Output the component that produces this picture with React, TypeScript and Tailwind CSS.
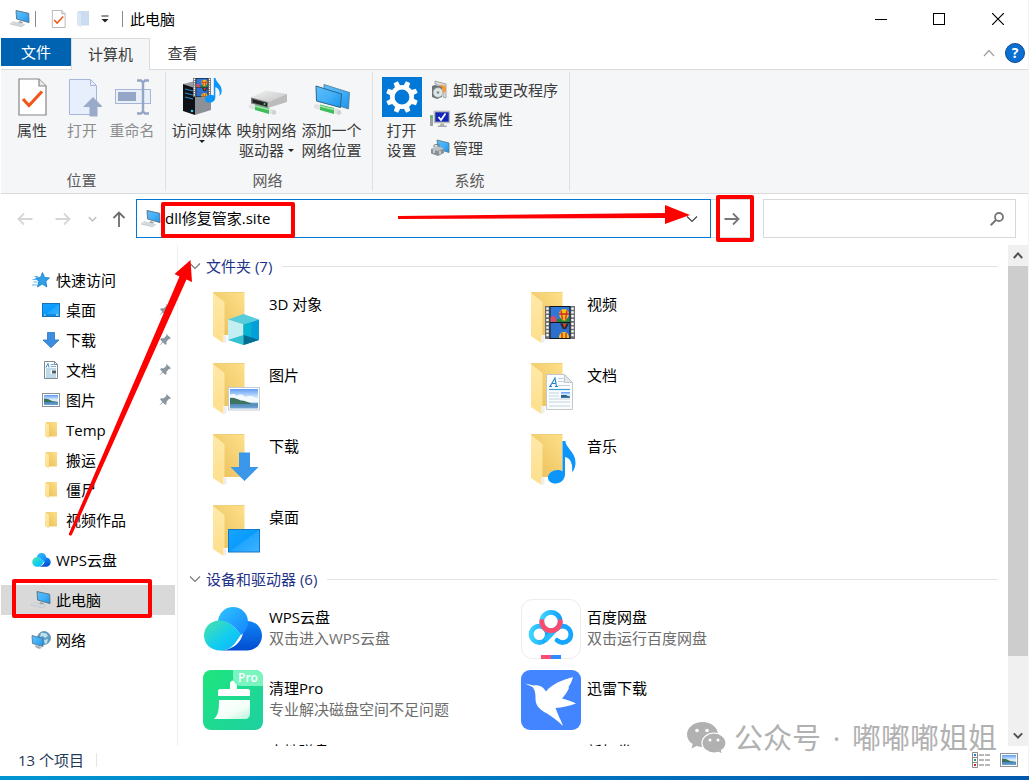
import type { ReactNode } from "react";

const FONT = "font-['Open_Sans','Noto_Sans_CJK_SC',sans-serif]";

/* ---------- shared gradients ---------- */

function Gradients() {
  return (
    <svg className="absolute size-0" aria-hidden="true">
      <defs>
        <linearGradient id="screen" x1="0" y1="0" x2="1" y2="1">
          <stop offset="0" stopColor="#5cc0fb" />
          <stop offset="0.5" stopColor="#44b0f8" />
          <stop offset="1" stopColor="#1b93ea" />
        </linearGradient>
        <linearGradient id="folderBack" x1="0" y1="1" x2="1" y2="0">
          <stop offset="0" stopColor="#e9bd57" />
          <stop offset="1" stopColor="#fde08a" />
        </linearGradient>
        <linearGradient id="folderFront" x1="0" y1="0" x2="0" y2="1">
          <stop offset="0" stopColor="#ffe9a9" />
          <stop offset="1" stopColor="#fddf8c" />
        </linearGradient>
        <linearGradient id="sky" x1="0" y1="0" x2="0" y2="1">
          <stop offset="0" stopColor="#5f9cf5" />
          <stop offset="0.5" stopColor="#e6f4fd" />
          <stop offset="0.72" stopColor="#b9d9ee" />
          <stop offset="0.75" stopColor="#4d86b8" />
          <stop offset="1" stopColor="#6fa6d4" />
        </linearGradient>
        <linearGradient id="desk" x1="0" y1="0" x2="1" y2="1">
          <stop offset="0" stopColor="#18a4ff" />
          <stop offset="0.5" stopColor="#0a9bff" />
          <stop offset="0.51" stopColor="#1fa6ff" />
          <stop offset="1" stopColor="#3fb2ff" />
        </linearGradient>
        <linearGradient id="cloudTop" x1="0" y1="0" x2="1" y2="1">
          <stop offset="0" stopColor="#2fc6ff" />
          <stop offset="1" stopColor="#1583ff" />
        </linearGradient>
        <linearGradient id="cloudLeft" x1="0" y1="0" x2="1" y2="1">
          <stop offset="0" stopColor="#4be3a4" />
          <stop offset="0.55" stopColor="#13cdf0" />
          <stop offset="1" stopColor="#0fb0fb" />
        </linearGradient>
        <linearGradient id="cloudRight" x1="0" y1="0" x2="0" y2="1">
          <stop offset="0" stopColor="#1285f6" />
          <stop offset="1" stopColor="#024cd0" />
        </linearGradient>
        <linearGradient id="metal" x1="0" y1="0" x2="1" y2="1">
          <stop offset="0" stopColor="#f2f2f2" />
          <stop offset="1" stopColor="#c4c4c4" />
        </linearGradient>
        <linearGradient id="ring" x1="0" y1="0" x2="1" y2="0">
          <stop offset="0" stopColor="#3bd3fc" />
          <stop offset="1" stopColor="#12a2ff" />
        </linearGradient>
        <linearGradient id="bristles" x1="0" y1="0" x2="1" y2="1">
          <stop offset="0" stopColor="#ffffff" />
          <stop offset="0.6" stopColor="#f3fff8" />
          <stop offset="1" stopColor="#b9f3da" />
        </linearGradient>
      </defs>
    </svg>
  );
}

/* ---------- small icons ---------- */

function PcIcon() {
  return (
    <svg viewBox="0 0 20 18" className="h-[18px] w-5 shrink-0" aria-hidden="true">
      <path d="M6 0.5 18.7 3.3 19 12.6 6.6 9z" fill="url(#screen)" stroke="#56717f" strokeWidth="0.9" />
      <path d="M9.6 11 13 12.2 12.2 13.6 8 12.6z" fill="#9aa4ab" />
      <path d="M3 11.7 14.6 14.6 11.6 16.8 0 14z" fill="#e4e8eb" stroke="#b4bcc2" strokeWidth="0.6" />
      <path d="M3.2 13 12.8 15.5M1.8 14 12 16.2" stroke="#bcc3c8" strokeWidth="0.5" />
    </svg>
  );
}

function CheckDoc({ className }: { className: string }) {
  return (
    <svg viewBox="0 0 30 38" className={className} aria-hidden="true">
      <path d="M2 1h20l7 7v29H2z" fill="#fff" stroke="#858585" strokeWidth="1.2" />
      <path d="M22 1v7h7" fill="#e8e8e8" stroke="#858585" strokeWidth="1.2" />
      <path d="M6 21 12 27.500 25 13.500" fill="none" stroke="#f1561b" strokeWidth="3.200" />
    </svg>
  );
}

function SmallFolder({ pale = false }: { pale?: boolean }) {
  return (
    <svg viewBox="0 0 12 18" className="h-[18px] w-3 shrink-0" aria-hidden="true">
      <path d="M1 1h11v14.500H2z" fill={pale ? "#cbdbf0" : "url(#folderBack)"} />
      <path d="M0 1l4 3v13.500L0 15z" fill={pale ? "#dbe7f6" : "url(#folderFront)"} />
    </svg>
  );
}

function Star() {
  return (
    <svg viewBox="0 0 18 16" className="h-4 w-[18px]" aria-hidden="true">
      <path d="M10.500 0.500 12.600 5.400 17.500 5.900 13.900 9.300 14.900 15 10.200 12 5.500 15 6.800 9.400 3.500 6 8.500 5.400z" fill="#2f9fe8" stroke="#147cc9" strokeWidth="0.8" />
      <path d="M2.500 4.500H6M0.500 7.500h4.500M1.500 10h4M0 13h5" stroke="#4bb1f2" strokeWidth="0.9" />
    </svg>
  );
}

function DesktopSmall() {
  return (
    <svg viewBox="0 0 18 14" className="h-[14px] w-[18px]" aria-hidden="true">
      <rect x="0.5" y="0.5" width="17" height="13" fill="url(#desk)" stroke="#1672b8" />
      <path d="M1 12h16" stroke="#0d7fd6" strokeWidth="1.500" />
      <path d="M2 12h1.500M14 12h2.500" stroke="#fff" strokeWidth="1" />
    </svg>
  );
}

function DownSmall() {
  return (
    <svg viewBox="0 0 18 16" className="h-4 w-[18px]" aria-hidden="true">
      <path d="M5.500 0.500h7v7.500h4.500L9 15.700 1 8h4.500z" fill="#3c8fe0" stroke="#2c75c0" strokeWidth="0.8" />
    </svg>
  );
}

function DocSmall() {
  return (
    <svg viewBox="0 0 18 18" className="size-[18px]" aria-hidden="true">
      <path d="M2.500 0.500h10l3 3v14h-13z" fill="#fff" stroke="#7f8a90" />
      <path d="M12.500 0.500v3h3" fill="none" stroke="#7f8a90" />
      <path d="M4 6.500l2-4M6 2.500l1 4" stroke="#2487c8" strokeWidth="0.9" />
      <path d="M8.500 3.500H12M8.500 5.500h5.500M4 8h10M4 10h4.500M4 12h4.500M4 14h10M4 16h10" stroke="#6fa9cd" strokeWidth="0.9" />
      <rect x="10" y="9.500" width="4" height="3" fill="#46616e" />
    </svg>
  );
}

function PictureSmall() {
  return (
    <svg viewBox="0 0 18 14" className="h-[14px] w-[18px]" aria-hidden="true">
      <rect x="0.5" y="0.5" width="17" height="13" fill="#fff" stroke="#8c9499" />
      <rect x="2" y="2" width="14" height="10" fill="url(#sky)" />
      <path d="M2 5.500 6 6 10 8 16 9H2z" fill="#3c7258" />
    </svg>
  );
}

function CloudIcon({ className }: { className: string }) {
  return (
    <svg viewBox="0 0 58 44" className={className} aria-hidden="true">
      <path d="M16 43.500C32 43 39 32 39 24c0-4 2-9 4-10 9 0 15 7 15 14.500 0 9-7 15-15 15z" fill="url(#cloudRight)" />
      <path d="M14 14C15 6 21 0 29 0c8 0 15 6 15 15 0 6-3 10-7 13C31 20 25 14 14 14z" fill="url(#cloudTop)" />
      <path d="M15 13.500c9 0 15 6 22 14C32 34 29 43.500 16 43.500 7 43.500 0 37 0 28.500S7 13.500 15 13.500z" fill="url(#cloudLeft)" />
    </svg>
  );
}

function NetworkIcon() {
  return (
    <svg viewBox="0 0 20 18" className="h-[18px] w-5" aria-hidden="true">
      <circle cx="13" cy="7" r="6.500" fill="#5b9fc8" stroke="#5b8097" strokeWidth="0.7" />
      <path d="M10 2c2-1 3 1 5 0l2 3-3 2-2-2-3 1zM13 9l4-1-1 4-2 1z" fill="#bfe2ef" />
      <path d="M1 4.500 12 7.500v8L1.500 12.500z" fill="url(#screen)" stroke="#4d7287" strokeWidth="0.8" />
      <path d="M5 14l4 1.500 2 1.500-3 1-4-2z" fill="#a9b1b6" />
    </svg>
  );
}

function Pin() {
  return (
    <svg viewBox="0 0 14 14" className="size-[14px]" aria-hidden="true">
      <path d="M8.200 0.800 13 5.200 11.800 6 11.200 5.800 8.600 8.600 8.400 11.400 7.300 11.800 4.900 9.400 1 13 4.300 8.700 2.100 6.500 3 5.300 5.800 5.300 8.400 2.700z" fill="#8b969e" />
    </svg>
  );
}

function Chevron({ className, color, up = false, width = 1.2 }: { className: string; color: string; up?: boolean; width?: number }) {
  return (
    <svg viewBox="0 0 12 8" className={className} aria-hidden="true">
      <path d={up ? "M1 7 6 1.500 11 7" : "M1 1.500 6 6.500 11 1.500"} fill="none" stroke={color} strokeWidth={width} />
    </svg>
  );
}

/* ---------- ribbon icons ---------- */

function OpenIcon() {
  return (
    <svg viewBox="0 0 40 40" className="size-10" aria-hidden="true">
      <path d="M7.500 2.500h21l6 6v29h-27z" fill="#e6effb" stroke="#a5b6d6" />
      <path d="M28.500 2.500v6h6" fill="none" stroke="#a5b6d6" />
      <path d="M31 20 41 30h-5.500v9.500h-8V30H21z" fill="#9aaac8" />
    </svg>
  );
}

function RenameIcon() {
  return (
    <svg viewBox="0 0 40 40" className="size-10" aria-hidden="true">
      <rect x="3.500" y="12.500" width="35" height="14" fill="#e8eff9" stroke="#a5b6d6" />
      <rect x="6" y="15" width="18" height="9" fill="#94a5c5" />
      <path d="M25 3.500h4l2 2 2-2h4M31 5v31M25 36.500h4l2-2 2 2h4" fill="none" stroke="#94a5c5" strokeWidth="2.400" />
    </svg>
  );
}

function Balloons({ x, y, w, h }: { x: number; y: number; w: number; h: number }) {
  return (
    <svg x={x} y={y} width={w} height={h} viewBox="0 0 30 33" preserveAspectRatio="none">
      <rect width="30" height="33" fill="#6b6f73" />
      <path d="M2.500 1.500v30M27.500 1.500v30" stroke="#fff" strokeWidth="2.400" strokeDasharray="2.200 1.600" />
      <rect x="4.500" width="21" height="33" fill="#141414" />
      <rect x="5.500" y="1" width="19" height="15" fill="#2f77d8" />
      <rect x="5.500" y="17" width="19" height="15" fill="#2f6fcc" />
      <path d="M5.500 12c2-2 4-1 6 1l13-1v4h-19z" fill="#27813f" />
      <path d="M5.500 11l3-1.500 3 3v3.500h-6z" fill="#d84a68" />
      <path d="M14 8a5 5 0 0 1 10 0c0 3-2.500 4.500-3.500 6.500h-3C16.500 12.500 14 11 14 8z" fill="#f4bd19" />
      <path d="M16 4.500l1.500 9M22 4.500l-1.500 9M14 8h10" stroke="#cb2d2d" strokeWidth="1.300" />
      <path d="M15 17.500h9l-3 5.500h-3z" fill="#292929" />
      <path d="M17.500 17.500h4l-2 4.500z" fill="#e0452f" />
      <path d="M14 32v-1a5 5 0 0 1 10 0v1z" fill="#f4c21c" />
      <path d="M17 27v5M21 27v5" stroke="#ca2d2d" strokeWidth="1.400" />
    </svg>
  );
}

function Note({ x, y, w, h }: { x: number; y: number; w: number; h: number }) {
  return (
    <svg x={x} y={y} width={w} height={h} viewBox="0 0 28 43" preserveAspectRatio="none">
      <path d="M14.500 0h2.800c.4 7 10.200 11 10.200 21.500 0 4-1.500 8-3.500 9.500 1-7-1-14-7-15v17c0 5.500-4 9.500-9.500 9.500C3 42.500 0 40 0 36.500 0 32 5 29 9.500 29c2 0 3.500.3 5 1.200z" fill="#0c95fb" />
    </svg>
  );
}

function MediaIcon() {
  return (
    <svg viewBox="0 0 40 40" className="size-10" aria-hidden="true">
      <path d="M1 7 11 4.500 29 8 13 11z" fill="#9a9ea2" />
      <path d="M1 7 13 11v27L1 34z" fill="#0f1216" />
      <path d="M13 11 29 8v25l-16 5z" fill="#8c9198" />
      <path d="M3 12l8 2M3 16l8 2M3 20l8 2" stroke="#2f86c8" strokeWidth="1.200" />
      <circle cx="10" cy="34" r="1.300" fill="#39d1f3" />
      <Balloons x={11} y={1} w={18} h={19} />
      <Note x={23} y={1} w={17} h={25} />
    </svg>
  );
}

function NetCable() {
  return (
    <>
      <path d="M4 29.500 27 35" stroke="#dfe3e1" strokeWidth="4.500" strokeLinecap="round" />
      <path d="M8 27.500 22 31v6L8 33z" fill="#3fbd5b" />
      <path d="M8 29l14 3.500" stroke="#9ee6a9" strokeWidth="1.400" />
      <circle cx="27" cy="35.500" r="2.300" fill="#cdd3d0" />
    </>
  );
}

function DriveIcon() {
  return (
    <svg viewBox="0 0 40 40" className="size-10" aria-hidden="true">
      <NetCable />
      <path d="M4 20.500 19 13.500 40 17 21 25z" fill="url(#metal)" />
      <path d="M21 25 40 17v8l-19 6z" fill="#bcbcbc" />
      <path d="M4 20.500 21 25v6L4 26.500z" fill="#777a7c" />
      <path d="M5.500 22 20 26v3.500L5.500 25.500z" fill="#1e2224" />
      <circle cx="17.500" cy="27" r="1" fill="#51dd63" />
    </svg>
  );
}

function NetPlaceIcon() {
  return (
    <svg viewBox="0 0 40 40" className="size-10" aria-hidden="true">
      <path d="M12 7.500 37.500 15.500 36.500 32 12 24z" fill="url(#screen)" stroke="#53798f" strokeWidth="0.8" />
      <NetCable />
      <path d="M4 9 29.500 17 28.500 30.500 4.500 24z" fill="url(#screen)" stroke="#2c658a" strokeWidth="1" />
    </svg>
  );
}

function GearIcon() {
  const teeth = [22, 67, 112, 157, 202, 247, 292, 337];
  return (
    <svg viewBox="0 0 40 40" className="size-10" aria-hidden="true">
      <rect width="40" height="40" fill="#0078d7" />
      <g fill="#fff">
        {teeth.map((a) => (
          <path key={a} d="M17 11 17.700 4h4.600L23 11z" transform={`rotate(${a} 20 20)`} />
        ))}
      </g>
      <circle cx="20" cy="20" r="9.700" fill="none" stroke="#fff" strokeWidth="4.600" />
    </svg>
  );
}

function UninstallIcon() {
  return (
    <svg viewBox="0 0 20 20" className="size-5" aria-hidden="true">
      <path d="M5 1 16 4v14l-3-1V7L5 4z" fill="#dadada" stroke="#8d8d8d" strokeWidth="0.7" />
      <circle cx="12" cy="9" r="4" fill="#f49a32" />
      <path d="M2 6l3-1 7 2v10l-5 2-5-2z" fill="#6c7478" />
      <circle cx="8" cy="12.500" r="4.800" fill="#dde7e5" stroke="#9aa7a7" strokeWidth="0.6" />
      <circle cx="8" cy="12.500" r="1.300" fill="#7f8b8b" />
    </svg>
  );
}

function SysPropsIcon() {
  return (
    <svg viewBox="0 0 20 20" className="size-5" aria-hidden="true">
      <path d="M0 6h3v11H0z" fill="#9ca39f" />
      <path d="M0.500 7h2v2h-2z" fill="#34cf3a" />
      <rect x="4.500" y="2.500" width="15" height="11" fill="#1427b8" stroke="#b9bdb9" strokeWidth="1.600" />
      <path d="M8.500 8l2.500 3 4.500-6.500" fill="none" stroke="#fff" strokeWidth="1.700" />
      <path d="M10.500 14.500h3l1 2h2l.5 1.500H7.500l.5-1.500h2z" fill="#a9aea9" />
    </svg>
  );
}

function ManageIcon() {
  return (
    <svg viewBox="0 0 20 20" className="size-5" aria-hidden="true">
      <path d="M7 2 19 5v9.500L8 11z" fill="url(#screen)" stroke="#57737f" strokeWidth="0.8" />
      <path d="M1 11l6-3 7 2.500V15l-6 3-7-2.500z" fill="#8b9297" />
      <path d="M1 11l6-3 7 2.500-6 2.500z" fill="#bdc3c6" />
      <path d="M4 9V7l5-1v3" fill="none" stroke="#767d81" />
      <path d="M4 12v3M10 13v3" stroke="#f0f0f0" strokeWidth="1.200" />
    </svg>
  );
}

/* ---------- tile icons ---------- */

function Folder({ children }: { children?: ReactNode }) {
  return (
    <svg viewBox="0 -1 60 60" className="size-[60px] shrink-0" aria-hidden="true">
      <path d="M10 5.500h31.500V48H20z" fill="url(#folderBack)" />
      <path d="M10 5.500h31.500" stroke="#f0d07c" strokeWidth="1" />
      <path d="M10 6 21.500 15v32.500l-1 1V56L10 49z" fill="url(#folderFront)" />
      <path d="M20.500 48.500V56l3-1v-6.500z" fill="#eee" />
      {children}
    </svg>
  );
}

function Cube() {
  return (
    <>
      <path d="M40.500 27 56 32.500 40.500 37.500 25 32.500z" fill="#56cddd" />
      <path d="M25 32.500 40.500 37.500v20.500L25 53z" fill="#c3eef2" />
      <path d="M40.500 37.500 56 32.500V53l-15.500 5z" fill="#049fd8" />
      <path d="M40.500 37.500l8-2.500v15l-8-2z" fill="#05b4cf" />
      <path d="M40.500 48v10L25 53z" fill="#32c2d2" />
      <path d="M40.500 48v10L56 53z" fill="#056c92" />
    </>
  );
}

function Picture() {
  return (
    <>
      <rect x="25.500" y="29.500" width="31" height="22.500" fill="#fff" stroke="#c5ccd2" />
      <rect x="27" y="31" width="28" height="19.500" fill="url(#sky)" />
      <path d="M27 37c3-2 5-1 7 1 4-3 6-1 8 1 5-2 8-1 13 2v3H27z" fill="#f3fafe" />
      <path d="M27 40c4-1 7 1 11 2.500 4 0 8 2 11 3.500H27z" fill="#3d7460" />
    </>
  );
}

function Paper() {
  return (
    <>
      <path d="M25.500 16.500h18l8 8v27h-26z" fill="#fafcfd" stroke="#c3c8cb" />
      <path d="M43.500 16.500v8h8z" fill="#e3e7ea" stroke="#b8bec2" strokeWidth="0.8" />
      <path d="M29 28.500 34 20l1.500 8.500M31 25.500h4M28 28.500h3M34 28.500h3" fill="none" stroke="#2483c5" strokeWidth="1.100" />
      <path d="M28 31.500h21" stroke="#3f9fd8" strokeWidth="1.200" />
      <path d="M37 20.500h6M37 23.500h6M37 27.500h12M28 35h10M28 38h10M28 41h21M28 44h21M28 48h21" stroke="#c3d3dd" strokeWidth="1" />
      <rect x="40" y="34" width="9" height="6" fill="url(#sky)" />
      <path d="M40 37h5l4 2.500h-9z" fill="#256084" />
    </>
  );
}

function CleanerIcon() {
  return (
    <span className="relative block size-[60px] overflow-hidden rounded-lg bg-linear-to-br from-[#1fe57c] to-[#1fd0a0]">
      <svg viewBox="0 0 60 60" className="size-[60px]" aria-hidden="true">
        <path d="M27 14a3.500 3.500 0 0 1 7 0v5h11c1.500 0 2 1 2 2v5H15v-5c0-1 1-2 2-2h10z" fill="#fff" />
        <path d="M16 30h31v13c0 4-2 6-5 6H11c4-4 5-8 5-19z" fill="url(#bristles)" />
      </svg>
      <span className="absolute top-0 right-0 flex h-4 w-[30px] items-center justify-center rounded-bl-lg bg-[#7bf5c0] text-xs font-semibold text-white">
        Pro
      </span>
    </span>
  );
}

function BaiduIcon() {
  return (
    <svg viewBox="0 0 60 60" className="size-[60px] shrink-0" aria-hidden="true">
      <rect x="0.500" y="0.500" width="59" height="59" rx="11" fill="#fff" stroke="#ececec" />
      <g fill="none" strokeWidth="4.800">
        <circle cx="18.300" cy="35.300" r="8.200" stroke="url(#ring)" />
        <path d="M24 41.500 35 30" stroke="#27bdfd" />
        <path d="M36 41.300a8.200 8.200 0 1 0 0-11.800" stroke="#16a6ff" strokeLinecap="round" />
        <circle cx="30" cy="22.500" r="9.200" fill="#fff" stroke="url(#ring)" />
        <path d="M20.800 22.500a9.200 9.200 0 0 0 18.400 0" stroke="#fb4c70" strokeLinecap="round" />
      </g>
      <path d="M20 56h10v4H20z" fill="#ff4d72" />
      <path d="M30 56h10v4H30z" fill="#2b8cff" />
    </svg>
  );
}

function BirdIcon() {
  return (
    <svg viewBox="0 0 60 60" className="size-[60px] shrink-0" aria-hidden="true">
      <rect width="60" height="60" rx="9" fill="#4285ff" />
      <path d="M4 13.500 13 15.500c5-1 9 1 12 6C31 14 41 10 52 7c-1 4-2.500 7-4.500 10l.5 1c-2 4.500-4 7-7 10.500C46 29.500 51 31.500 55 33.500 48 36 41 37.500 34.500 38c2 6 5 11 7.500 18C36 50 31 46.500 26 43.500c-8-4-12-9-11.500-15.500 0-5-.5-8-3-11z" fill="#fff" />
    </svg>
  );
}

/* ---------- window chrome ---------- */

function TitleBar() {
  return (
    <header className="flex h-[38px] shrink-0 items-center pl-[9px]">
      <PcIcon />
      <span className="ml-[5px] h-4 w-px bg-[#8a8a8a]" />
      <button type="button" aria-label="属性" className="ml-[15px]">
        <CheckDoc className="h-[18px] w-[15px]" />
      </button>
      <button type="button" aria-label="新建文件夹" className="ml-[11px]">
        <SmallFolder pale />
      </button>
      <button type="button" aria-label="自定义快速访问工具栏" className="ml-3">
        <svg viewBox="0 0 8 8" className="size-2" aria-hidden="true">
          <path d="M0.500 1h7" stroke="#222" />
          <path d="M0.500 4h7L4 7.500z" fill="#222" />
        </svg>
      </button>
      <span className="ml-[13px] h-4 w-px bg-[#8a8a8a]" />
      <h1 className="ml-[7px] text-black">此电脑</h1>
      <div className="ml-auto flex h-full">
        <button type="button" aria-label="最小化" className="flex w-[58px] items-center justify-center">
          <span className="h-px w-3 bg-black" />
        </button>
        <button type="button" aria-label="最大化" className="flex w-[58px] items-center justify-center">
          <span className="size-3 border border-black" />
        </button>
        <button type="button" aria-label="关闭" className="flex w-[60px] items-center justify-center">
          <svg viewBox="0 0 12 12" className="size-3" aria-hidden="true">
            <path d="M0 0 12 12M12 0 0 12" stroke="#000" strokeWidth="1.200" />
          </svg>
        </button>
      </div>
    </header>
  );
}

function Tabs() {
  return (
    <nav className="flex h-8 shrink-0 items-stretch border-b border-[#dadbdc]">
      <button type="button" className="mb-[3px] w-[70px] bg-[#0063b1] text-white">
        文件
      </button>
      <button type="button" className="-mb-px w-[79px] border border-b-0 border-[#dadbdc] bg-[#f5f6f7] pb-px text-[#3b3b3b]">
        计算机
      </button>
      <button type="button" className="w-[65px] pb-px text-[#3b3b3b]">
        查看
      </button>
      <div className="ml-auto flex items-center gap-[10px] pr-[3px] pb-px">
        <button type="button" aria-label="最小化功能区">
          <Chevron className="h-2 w-3" color="#a0a0a0" up />
        </button>
        <button
          type="button"
          aria-label="帮助"
          className="size-5 rounded-full border border-[#0b4c93] bg-[#0a6fd0] text-sm leading-[18px] font-bold text-white"
        >
          ?
        </button>
      </div>
    </nav>
  );
}

function BigButton({ icon, lines, width, muted = false, caret }: {
  icon: ReactNode;
  lines: string[];
  width: string;
  muted?: boolean;
  caret?: "inline" | "below";
}) {
  const arrow = (
    <svg viewBox="0 0 6 3" className="h-[3px] w-[6px]" aria-hidden="true">
      <path d="M0 0h6L3 3z" fill="#222" />
    </svg>
  );
  return (
    <button type="button" className={`flex flex-col items-center whitespace-nowrap ${width} ${muted ? "text-[#8d8d8d]" : "text-[#3b3b3b]"}`}>
      <span className="mb-[3px] flex size-10 items-center justify-center">{icon}</span>
      {lines.map((line, i) => (
        <span key={line} className="flex h-5 items-center gap-1 leading-5">
          {line}
          {caret === "inline" && i === lines.length - 1 && arrow}
        </span>
      ))}
      {caret === "below" && arrow}
    </button>
  );
}

function RibbonGroup({ title, width, children }: { title: string; width: string; children: ReactNode }) {
  return (
    <section className={`my-[2px] flex flex-col border-r border-[#dfe0e2] pt-[5px] pb-px ${width}`}>
      <div className="flex flex-1 items-start">{children}</div>
      <h2 className="h-5 pr-[3px] text-center leading-5 text-[#5a5a5a]">{title}</h2>
    </section>
  );
}

const systemLinks = [
  { label: "卸载或更改程序", icon: <UninstallIcon /> },
  { label: "系统属性", icon: <SysPropsIcon /> },
  { label: "管理", icon: <ManageIcon /> },
];

function Ribbon() {
  return (
    <div className="flex h-[124px] shrink-0 border-b border-[#dadbdc] bg-[#f5f6f7]">
      <RibbonGroup title="位置" width="w-[165px]">
        <div className="flex pl-[6px]">
          <BigButton icon={<CheckDoc className="h-[38px] w-[30px]" />} lines={["属性"]} width="w-[50px]" />
          <BigButton icon={<OpenIcon />} lines={["打开"]} width="w-[50px]" muted />
          <BigButton icon={<RenameIcon />} lines={["重命名"]} width="w-[50px]" muted />
        </div>
      </RibbonGroup>
      <RibbonGroup title="网络" width="w-[207px]">
        <div className="flex pl-[3px]">
          <BigButton icon={<MediaIcon />} lines={["访问媒体"]} width="w-[65px]" caret="below" />
          <BigButton icon={<DriveIcon />} lines={["映射网络", "驱动器"]} width="w-[65px]" caret="inline" />
          <BigButton icon={<NetPlaceIcon />} lines={["添加一个", "网络位置"]} width="w-[65px]" />
        </div>
      </RibbonGroup>
      <RibbonGroup title="系统" width="w-[197px]">
        <div className="flex items-start pl-[3px]">
          <BigButton icon={<GearIcon />} lines={["打开", "设置"]} width="w-[51px]" />
          <div className="-mt-[2px] ml-[3px] flex flex-col">
            {systemLinks.map(({ label, icon }) => (
              <button key={label} type="button" className="flex h-[29px] items-center gap-[3px] text-[#3b3b3b]">
                {icon}
                {label}
              </button>
            ))}
          </div>
        </div>
      </RibbonGroup>
    </div>
  );
}

function NavArrow({ d, color }: { d: string; color: string }) {
  return (
    <svg viewBox="0 0 16 16" className="size-4" aria-hidden="true">
      <path d={d} fill="none" stroke={color} strokeWidth="1.800" />
    </svg>
  );
}

function AddressRow() {
  return (
    <div className="flex h-[51px] shrink-0 items-start pt-[5px] pr-3 pl-4">
      <div className="flex h-[39px] w-[119px] shrink-0 items-center">
        <button type="button" aria-label="后退">
          <NavArrow d="M15.500 8H1M7 2.500 1.500 8 7 13.500" color="#d6d6d6" />
        </button>
        <button type="button" aria-label="前进" className="ml-[22px]">
          <NavArrow d="M0.500 8H15M9 2.500 14.500 8 9 13.500" color="#d6d6d6" />
        </button>
        <button type="button" aria-label="最近浏览的位置" className="ml-[17px]">
          <Chevron className="h-[6px] w-[9px]" color="#c4c4c4" width={2} />
        </button>
        <button type="button" aria-label="上移" className="ml-[14px]">
          <NavArrow d="M8 16V1M2.500 7 8 1.500 13.500 7" color="#6d6d6d" />
        </button>
      </div>
      <div className="relative flex h-[39px] flex-1 items-center border border-[#0078d7] pl-1">
        <PcIcon />
        <input
          aria-label="地址"
          defaultValue="dll修复管家.site"
          className="ml-1 h-full min-w-0 flex-1 pb-[2px] text-black outline-none"
        />
        <button type="button" aria-label="以前的位置" className="mr-3">
          <Chevron className="h-2 w-3" color="#444" />
        </button>
        <span className="absolute top-[2px] left-6 h-9 w-[134px] rounded-xs border-4 border-[#ff0000]" />
        <svg viewBox="0 0 294 22" className="absolute top-1 right-[19px] h-[22px] w-[294px]" aria-hidden="true">
          <path d="M1 12 268 9V1L293 11 268 20v-6L1 15z" fill="#ff0000" />
        </svg>
      </div>
      <button
        type="button"
        aria-label="转到"
        className="relative flex h-[39px] w-[42px] items-center justify-center border border-l-0 border-[#d9d9d9]"
      >
        <NavArrow d="M0.500 8H15M9 2.500 14.500 8 9 13.500" color="#777" />
        <span className="absolute -top-[5px] -right-[2px] h-[47px] w-[38px] rounded-xs border-4 border-[#ff0000]" />
      </button>
      <label className="ml-[10px] flex h-[39px] w-[253px] items-center border border-[#d9d9d9] pr-[11px]">
        <input aria-label="搜索此电脑" className="h-full min-w-0 flex-1 pl-2 outline-none" />
        <svg viewBox="0 0 14 14" className="size-[14px]" aria-hidden="true">
          <circle cx="9" cy="5" r="4" fill="none" stroke="#777" strokeWidth="1.800" />
          <path d="M6 8 0.700 13.300" stroke="#777" strokeWidth="2" />
        </svg>
      </label>
    </div>
  );
}

/* ---------- body ---------- */

const quickAccess = [
  { label: "桌面", icon: <DesktopSmall />, pinned: true },
  { label: "下载", icon: <DownSmall />, pinned: true },
  { label: "文档", icon: <DocSmall />, pinned: true },
  { label: "图片", icon: <PictureSmall />, pinned: true },
  { label: "Temp", icon: <SmallFolder /> },
  { label: "搬运", icon: <SmallFolder /> },
  { label: "僵尸", icon: <SmallFolder /> },
  { label: "视频作品", icon: <SmallFolder /> },
];

function SideLink({ label, icon, nested = false, pinned = false, active = false }: {
  label: string;
  icon: ReactNode;
  nested?: boolean;
  pinned?: boolean;
  active?: boolean;
}) {
  return (
    <a
      href="#"
      className={`relative mr-[2px] flex h-[30px] items-center text-black ${nested ? "pl-10" : "pl-[30px]"} ${active ? "bg-[#d9d9d9]" : ""}`}
    >
      <span className="mr-[5px] flex w-5 shrink-0 items-center justify-center">{icon}</span>
      {label}
      {pinned && (
        <span className="mr-[3px] ml-auto">
          <Pin />
        </span>
      )}
      {active && <span className="absolute -top-[6px] left-[11px] h-[39px] w-[140px] rounded-xs border-4 border-[#ff0000]" />}
    </a>
  );
}

function Sidebar() {
  return (
    <aside className="w-[177px] shrink-0 border-r border-[#f0f0f0] pt-5">
      <SideLink label="快速访问" icon={<Star />} />
      {quickAccess.map((item) => (
        <SideLink key={item.label} {...item} nested />
      ))}
      <div className="mt-[10px] flex flex-col gap-[10px]">
        <SideLink label="WPS云盘" icon={<CloudIcon className="h-[14px] w-[19px]" />} />
        <SideLink label="此电脑" icon={<PcIcon />} active />
        <SideLink label="网络" icon={<NetworkIcon />} />
      </div>
    </aside>
  );
}

const folders = [
  { name: "3D 对象", art: <Cube /> },
  { name: "视频", art: <Balloons x={24} y={19} w={30} h={33} /> },
  { name: "图片", art: <Picture /> },
  { name: "文档", art: <Paper /> },
  { name: "下载", art: <path d="M36 23.500h11V38h8.500L41.500 52 27.500 38H36z" fill="#3b97ea" /> },
  { name: "音乐", art: <Note x={27} y={12} w={28} h={43} /> },
  { name: "桌面", art: <rect x="25.500" y="29.500" width="31" height="22.500" fill="url(#desk)" stroke="#1479c4" /> },
];

const devices = [
  { name: "WPS云盘", note: "双击进入WPS云盘", icon: <CloudIcon className="h-11 w-[58px]" /> },
  { name: "百度网盘", note: "双击运行百度网盘", icon: <BaiduIcon /> },
  { name: "清理Pro", note: "专业解决磁盘空间不足问题", icon: <CleanerIcon /> },
  { name: "迅雷下载", note: "", icon: <BirdIcon /> },
];

const drives = ["本地磁盘 (C:)", "新加卷 (D:)"];

function GroupTitle({ children }: { children: ReactNode }) {
  return (
    <h2 className="flex h-[22px] items-center text-[#1e3287]">
      <Chevron className="mr-[5px] h-2 w-3" color="#7b7b7b" />
      {children}
      <span className="ml-[10px] h-px flex-1 bg-[#e2e2e2]" />
    </h2>
  );
}

function Tile({ icon, name, note }: { icon: ReactNode; name: string; note?: string }) {
  return (
    <li className="flex h-[60px] gap-[6px] pl-[14px]">
      <span className="flex size-[60px] shrink-0 items-center justify-center">{icon}</span>
      <div className="pt-2 leading-[21px] whitespace-nowrap">
        <p className="text-black">{name}</p>
        {note && <p className="text-[#6d6d6d]">{note}</p>}
      </div>
    </li>
  );
}

function Content() {
  return (
    <main className="min-w-0 flex-1 overflow-hidden">
      <div className="flex flex-col gap-[9px] pt-[10px] pr-[10px] pl-[11px]">
        <GroupTitle>文件夹 (7)</GroupTitle>
        <ul className="grid grid-cols-[318px_318px] gap-y-[11px]">
          {folders.map(({ name, art }) => (
            <Tile key={name} name={name} icon={<Folder>{art}</Folder>} />
          ))}
        </ul>
        <GroupTitle>设备和驱动器 (6)</GroupTitle>
        <ul className="grid grid-cols-[318px_318px] gap-y-[11px]">
          {devices.map((d) => (
            <Tile key={d.name} {...d} />
          ))}
          {drives.map((name) => (
            <li key={name} className="h-[60px] pl-20 leading-[21px] text-black">
              {name}
            </li>
          ))}
        </ul>
      </div>
    </main>
  );
}

function Scrollbar() {
  return (
    <div className="flex w-5 shrink-0 flex-col bg-[#f0f0f0]">
      <button type="button" aria-label="向上滚动" className="flex h-[21px] items-center justify-center">
        <Chevron className="h-[7px] w-[10px]" color="#505050" up width={2.4} />
      </button>
      <div className="flex-1">
        <div className="h-[85%] bg-[#cdcdcd]" />
      </div>
      <button type="button" aria-label="向下滚动" className="flex h-[21px] items-center justify-center">
        <Chevron className="h-[7px] w-[10px]" color="#505050" width={2.4} />
      </button>
    </div>
  );
}

function Watermark() {
  return (
    <div className="absolute right-8 bottom-[22px] flex h-10 items-center text-[29px] leading-10 whitespace-nowrap text-[#b1b1b1]">
      <svg viewBox="0 0 39 32" className="mr-2 h-8 w-[39px]" aria-hidden="true">
        <path d="M15.500 0C7 0 0 5.500 0 12.500c0 4 2.200 7.300 5.700 9.500L4.500 26.500 9.500 24c2 .6 4 .9 6 .9C24 25 31 19.500 31 12.500S24 0 15.500 0z" fill="#b1b1b1" />
        <path d="M27 11c-6.700 0-12 4.500-12 10s5.300 10 12 10c1.600 0 3-.3 4.500-.7l4 1.700-1-3.500c2.700-1.800 4.500-4.500 4.500-7.500 0-5.500-5.300-10-12-10z" fill="#b1b1b1" stroke="#fff" strokeWidth="1.200" />
        <g fill="#fff">
          <circle cx="10" cy="8.500" r="1.800" />
          <circle cx="20" cy="8.500" r="1.800" />
          <circle cx="23" cy="18" r="1.500" />
          <circle cx="31" cy="18" r="1.500" />
        </g>
      </svg>
      <span>公众号</span>
      <span className="w-[31px] text-center">·</span>
      <span>嘟嘟嘟姐姐</span>
    </div>
  );
}

function StatusBar() {
  return (
    <footer className="flex h-[30px] shrink-0 items-center pr-[10px] pb-[2px] pl-[17px] text-[#1e395b]">
      <span>13 个项目</span>
      <span className="ml-3 h-[14px] w-px bg-[#e6e6e6]" />
      <div className="relative z-10 ml-auto flex items-center gap-[10px]">
        <button type="button" aria-label="详细信息">
          <svg viewBox="0 0 18 16" className="h-4 w-[18px]" aria-hidden="true">
            <path d="M0.500 0.500h5v15h-5zM0.500 5.500h5M0.500 10.500h5" fill="#fff" stroke="#8c8c8c" />
            <path d="M2 3h2" stroke="#2a76c8" strokeWidth="2" />
            <path d="M2 8h2" stroke="#2f9d6b" strokeWidth="2" />
            <path d="M2 13h2" stroke="#d4281e" strokeWidth="2" />
            <path d="M7 3h5M13 3h5M7 8h5M13 8h5M7 13h5M13 13h5" stroke="#707070" />
          </svg>
        </button>
        <button type="button" aria-label="大缩略图">
          <PictureSmall />
        </button>
      </div>
    </footer>
  );
}

export default function App() {
  return (
    <div className={`relative flex h-screen flex-col overflow-hidden bg-white text-[15px] leading-5 ${FONT}`}>
      <Gradients />
      <div className="flex min-h-0 flex-1 flex-col border-r border-[#f3f3f3] pl-px">
        <TitleBar />
        <Tabs />
        <Ribbon />
        <AddressRow />
        <div className="relative flex min-h-0 flex-1">
          <Sidebar />
          <Content />
          <Scrollbar />
          {/* pointer from the sidebar up to the address bar */}
          <svg viewBox="0 0 126 278" className="absolute top-[14px] left-[67px] h-[278px] w-[126px]" aria-hidden="true">
            <path d="M122.500 1 124 23 118.500 20.500 4 275.500a1.500 1.500 0 0 1-3-1L111.500 17.500 106.500 15z" fill="#ff0000" />
          </svg>
        </div>
        <StatusBar />
      </div>
      <div className="h-1 shrink-0 bg-linear-to-r from-[#0096d2] to-[#0058ae]" />
      <Watermark />
    </div>
  );
}
